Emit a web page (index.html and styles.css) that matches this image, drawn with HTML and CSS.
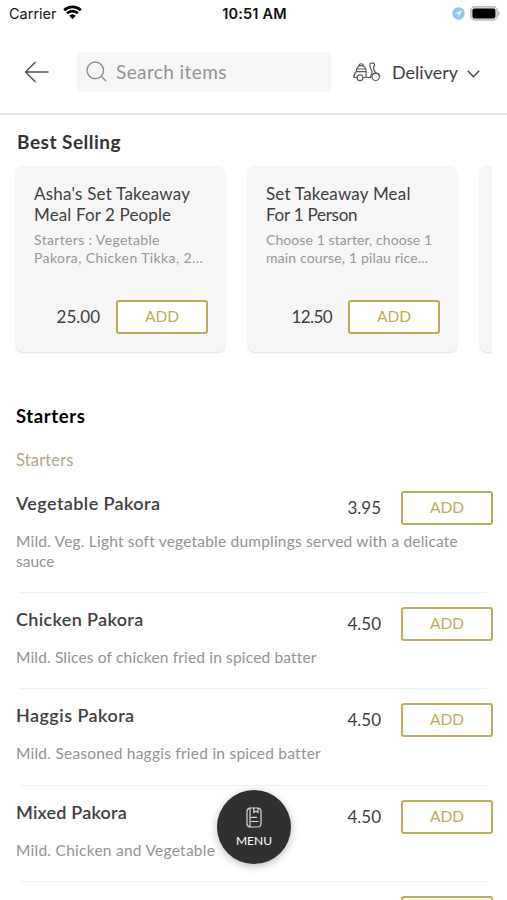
FILE: index.html
```html
<!DOCTYPE html>
<html lang="en">
<head>
<meta charset="utf-8">
<title>Menu</title>
<link rel="stylesheet" href="styles.css">
</head>
<body>
<div class="screen">
  <div class="status">
    <div class="carrier"><span>Carrier</span>
      <svg width="19" height="15" viewBox="0 0 19 15" fill="none" stroke="#000"><path d="M1.2 5.2a12 12 0 0 1 16.6 0M4.1 8.3a7.8 7.8 0 0 1 10.8 0" stroke-width="2.7"/><path d="M9.5 14.2 6.2 10.8a4.8 4.8 0 0 1 6.6 0z" fill="#000" stroke="none"/></svg>
    </div>
    <div class="clock">10:51 AM</div>
    <div class="indicators">
      <svg width="13" height="13" viewBox="0 0 13 13"><circle cx="6.5" cy="6.5" r="6.2" fill="#8fc1fb"/><path d="M9.8 3.2 2.9 6.4l3.4.4.4 3.3z" fill="#fff"/></svg>
      <svg width="30" height="15" viewBox="0 0 30 15"><rect x=".8" y=".8" width="26.4" height="13.2" rx="4" fill="#e4e4e4" stroke="#bdbdbd" stroke-width="1.5"/><rect x="2.4" y="2.4" width="23" height="10" rx="2.2" fill="#000"/><path d="M28.3 5v5c1.700-.8 1.700-4.200 0-5z" fill="#aaa"/></svg>
    </div>
  </div>
  <header class="header">
    <svg class="back" width="25" height="22" viewBox="0 0 25 22" fill="none" stroke="#505050" stroke-width="1.4"><path d="M24.500 11H1.500M11.500 1l-10 10 10 10"/></svg>
    <div class="search">
      <svg width="21" height="21" viewBox="0 0 21 21" fill="none" stroke="#8c8c8c" stroke-width="1.3"><circle cx="9.300" cy="9.300" r="8.300"/><path d="m15.300 15.300 4.900 4.900"/></svg>
      <span>Search items</span>
    </div>
    <div class="mode">
      <svg width="28" height="20" viewBox="0 0 28 20" fill="none" stroke="#5c5c5c" stroke-width="1.200" stroke-linejoin="round" stroke-linecap="round"><path d="M3.300 9.700c.1-3.800 1.800-6 4.900-6s4.800 2.200 4.900 6zM5.900 3.900c.2-2.900 4.400-2.900 4.600 0M4 7h8.500M3.300 9.700C1.500 11 .8 13 .8 15.500h3.300M13.100 9.700v5.800M9.900 15.500h7.800M17.700 15.500c-.2-2.300.8-3.300 1.300-4.500.6-1.500-.7-3.300-1.400-4.700-.7-1.600-1.200-3.100-.5-4.800l3.600-.7c1.200 1.400.9 2.900-.2 4 0 2.400.4 4.700 2.600 6.400 2.200.3 3.500 1.500 3.600 3.300"/><circle cx="7" cy="15.700" r="2.900"/><circle cx="22.700" cy="14.800" r="3.700"/><path d="m18.500 12.500 4.700-1.300"/></svg>
      <span>Delivery</span>
      <svg class="chev" width="13" height="8" viewBox="0 0 13 8" fill="none" stroke="#4b4b4b" stroke-width="1.500"><path d="m.8.800 5.600 5.900L12.200.800"/></svg>
    </div>
  </header>
  <main class="content">
    <h2 class="best-title">Best Selling</h2>
    <div class="carousel">
      <article class="card">
        <h3><span class="t1">Asha's Set Takeaway</span><br><span class="t2">Meal For 2 People</span></h3>
        <p><span class="t3">Starters : Vegetable</span><br><span class="t4">Pakora, Chicken Tikka, 2...</span></p>
        <div class="buy"><span class="price">25.00</span><button class="add">ADD</button></div>
      </article>
      <article class="card">
        <h3><span class="t5">Set Takeaway Meal</span><br><span class="t6">For 1 Person</span></h3>
        <p><span class="t7">Choose 1 starter, choose 1</span><br><span class="t8">main course, 1 pilau rice...</span></p>
        <div class="buy"><span class="price p12">12.50</span><button class="add">ADD</button></div>
      </article>
      <article class="card"></article>
    </div>
    <h2 class="section-title">Starters</h2>
    <div class="subsection">Starters</div>
    <div class="item tall"><div class="row"><h3 class="n1">Vegetable Pakora</h3><span class="price">3.95</span><button class="add">ADD</button></div><p><span class="d1">Mild. Veg. Light soft vegetable dumplings served with a delicate</span><br>sauce</p></div>
    <div class="item"><div class="row"><h3 class="n2">Chicken Pakora</h3><span class="price">4.50</span><button class="add">ADD</button></div><p class="d2">Mild. Slices of chicken fried in spiced batter</p></div>
    <div class="item"><div class="row"><h3 class="n3">Haggis Pakora</h3><span class="price">4.50</span><button class="add">ADD</button></div><p class="d3">Mild. Seasoned haggis fried in spiced batter</p></div>
    <div class="item"><div class="row"><h3 class="n4">Mixed Pakora</h3><span class="price">4.50</span><button class="add">ADD</button></div><p class="d4">Mild. Chicken and Vegetable</p></div>
    <div class="item"><div class="row"><h3></h3><button class="add" aria-label="Add"></button></div></div>
  </main>
  <button class="menu">
    <svg width="16" height="21" viewBox="0 0 16 21" fill="none" stroke="#d8d8d8" stroke-width="1.200" stroke-linecap="round"><rect x="1" y="1" width="14" height="19" rx="3.500"/><path d="M4 1v19M7.800 1.200v4.300l2.100-1.300 2.100 1.300V1.200M5.500 10.300h5M5.500 14.500h6.500"/></svg>
    <span>MENU</span>
  </button>
</div>
</body>
</html>
```
FILE: styles.css
```css
* { box-sizing: border-box; }
body { margin: 0; background: #fff; font-family: Lato, sans-serif; color: #404042; }
h2, h3, p { margin: 0; }
button { font-family: inherit; padding: 0; }
svg { display: block; flex: none; }
.screen { position: relative; width: 507px; height: 900px; overflow: hidden; }
.status { height: 28px; display: grid; grid-template-columns: 1fr auto 1fr; align-items: center; padding: 0 7px 2px 9px; font-family: Inter, sans-serif; font-size: 14.500px; color: #151515; }
.carrier { display: flex; align-items: center; gap: 6px; }
.carrier svg { position: relative; top: -1px; }
.clock { font-weight: 600; color: #111; letter-spacing: .2px; }
.indicators { display: flex; justify-content: flex-end; align-items: center; gap: 5px; }
.header { height: 87px; border-bottom: 2px solid #e5e5e5; padding: 24px 27px 0 24px; display: flex; align-items: flex-start; }
.back { margin-top: 9px; }
.search { width: 254px; height: 40px; margin-left: 28px; border-radius: 4px; background: #f6f6f6; display: flex; align-items: center; padding: 0 0 2px 9px; gap: 9px; color: #939393; font-size: 19px; letter-spacing: .4px; }
.mode { height: 40px; margin-left: 22px; display: flex; align-items: center; font-size: 18px; flex: 1; }
.mode span { margin-left: 11px; }
.chev { margin-left: auto; position: relative; top: 2px; }
.content { padding: 0 15px 0 16px; }
.best-title { padding: 15px 1px 0; font-size: 19px; line-height: 24px; height: 51px; font-weight: 700; color: #333; letter-spacing: .5px; }
.carousel { display: flex; gap: 23px; overflow: hidden; height: 190px; margin-left: -3px; padding-left: 3px; }
.card { flex: none; width: 209px; height: 186px; background: #f6f6f6; border-radius: 7px; box-shadow: 0 1px 2px #0002; padding: 18px 17px 18px 18px; display: flex; flex-direction: column; }
.card h3 { font-size: 17px; line-height: 20.500px; font-weight: 400; white-space: nowrap; }
.card p { margin-top: 6px; font-size: 14px; line-height: 18px; color: #989898; white-space: nowrap; }
.t1 { letter-spacing: .22px; }
.t2 { letter-spacing: .12px; }
.t3 { letter-spacing: .35px; }
.t4 { letter-spacing: .4px; }
.t5 { letter-spacing: .2px; }
.t6 { letter-spacing: -.25px; }
.t7 { letter-spacing: .08px; }
.t8 { letter-spacing: .16px; }
.buy { display: flex; justify-content: flex-end; align-items: center; margin-top: auto; }
.price { font-size: 17px; margin-right: 16px; padding-bottom: 1px; }
.price.p12 { letter-spacing: -.6px; }
.add { width: 92px; height: 34px; padding-bottom: 2px; border: 2px solid #bfab58; border-radius: 3px; background: #fff; color: #bfab58; font-size: 15.500px; flex: none; }
.section-title { margin-top: 48px; font-size: 18.500px; line-height: 24px; color: #000; letter-spacing: .6px; }
.subsection { margin-top: 21px; margin-bottom: 20px; font-size: 16.500px; line-height: 22px; color: #b2a88a; letter-spacing: .15px; }
.item { height: 96.300px; position: relative; }
.item.tall { height: 116px; }
.item::after { content: ""; display: block; position: absolute; left: 4px; right: 2px; top: 100%; margin-top: -15px; height: 1px; background: #f0f0f0; }
.row { display: flex; align-items: center; height: 34px; margin-right: -1px; }
.row h3 { flex: 1; font-size: 18px; line-height: 22px; position: relative; top: -5px; font-weight: 600; }
.n1 { letter-spacing: .4px; }
.n2 { letter-spacing: .35px; }
.n3 { letter-spacing: .45px; }
.n4 { letter-spacing: .2px; }
.row .price { margin-right: 20px; }
.item p { margin-top: 6px; font-size: 15.500px; line-height: 20px; color: #939393; white-space: nowrap; }
.d1 { letter-spacing: .2px; }
.d2 { letter-spacing: .16px; }
.d3 { letter-spacing: .24px; }
.d4 { letter-spacing: .26px; }
.menu { position: absolute; left: 217px; top: 790px; width: 74px; height: 74px; border: 0; border-radius: 50%; background: #303030; color: #fff; box-shadow: 0 2px 8px #0004; display: flex; flex-direction: column; align-items: center; padding-top: 17px; gap: 5px; font-size: 12px; }
```
